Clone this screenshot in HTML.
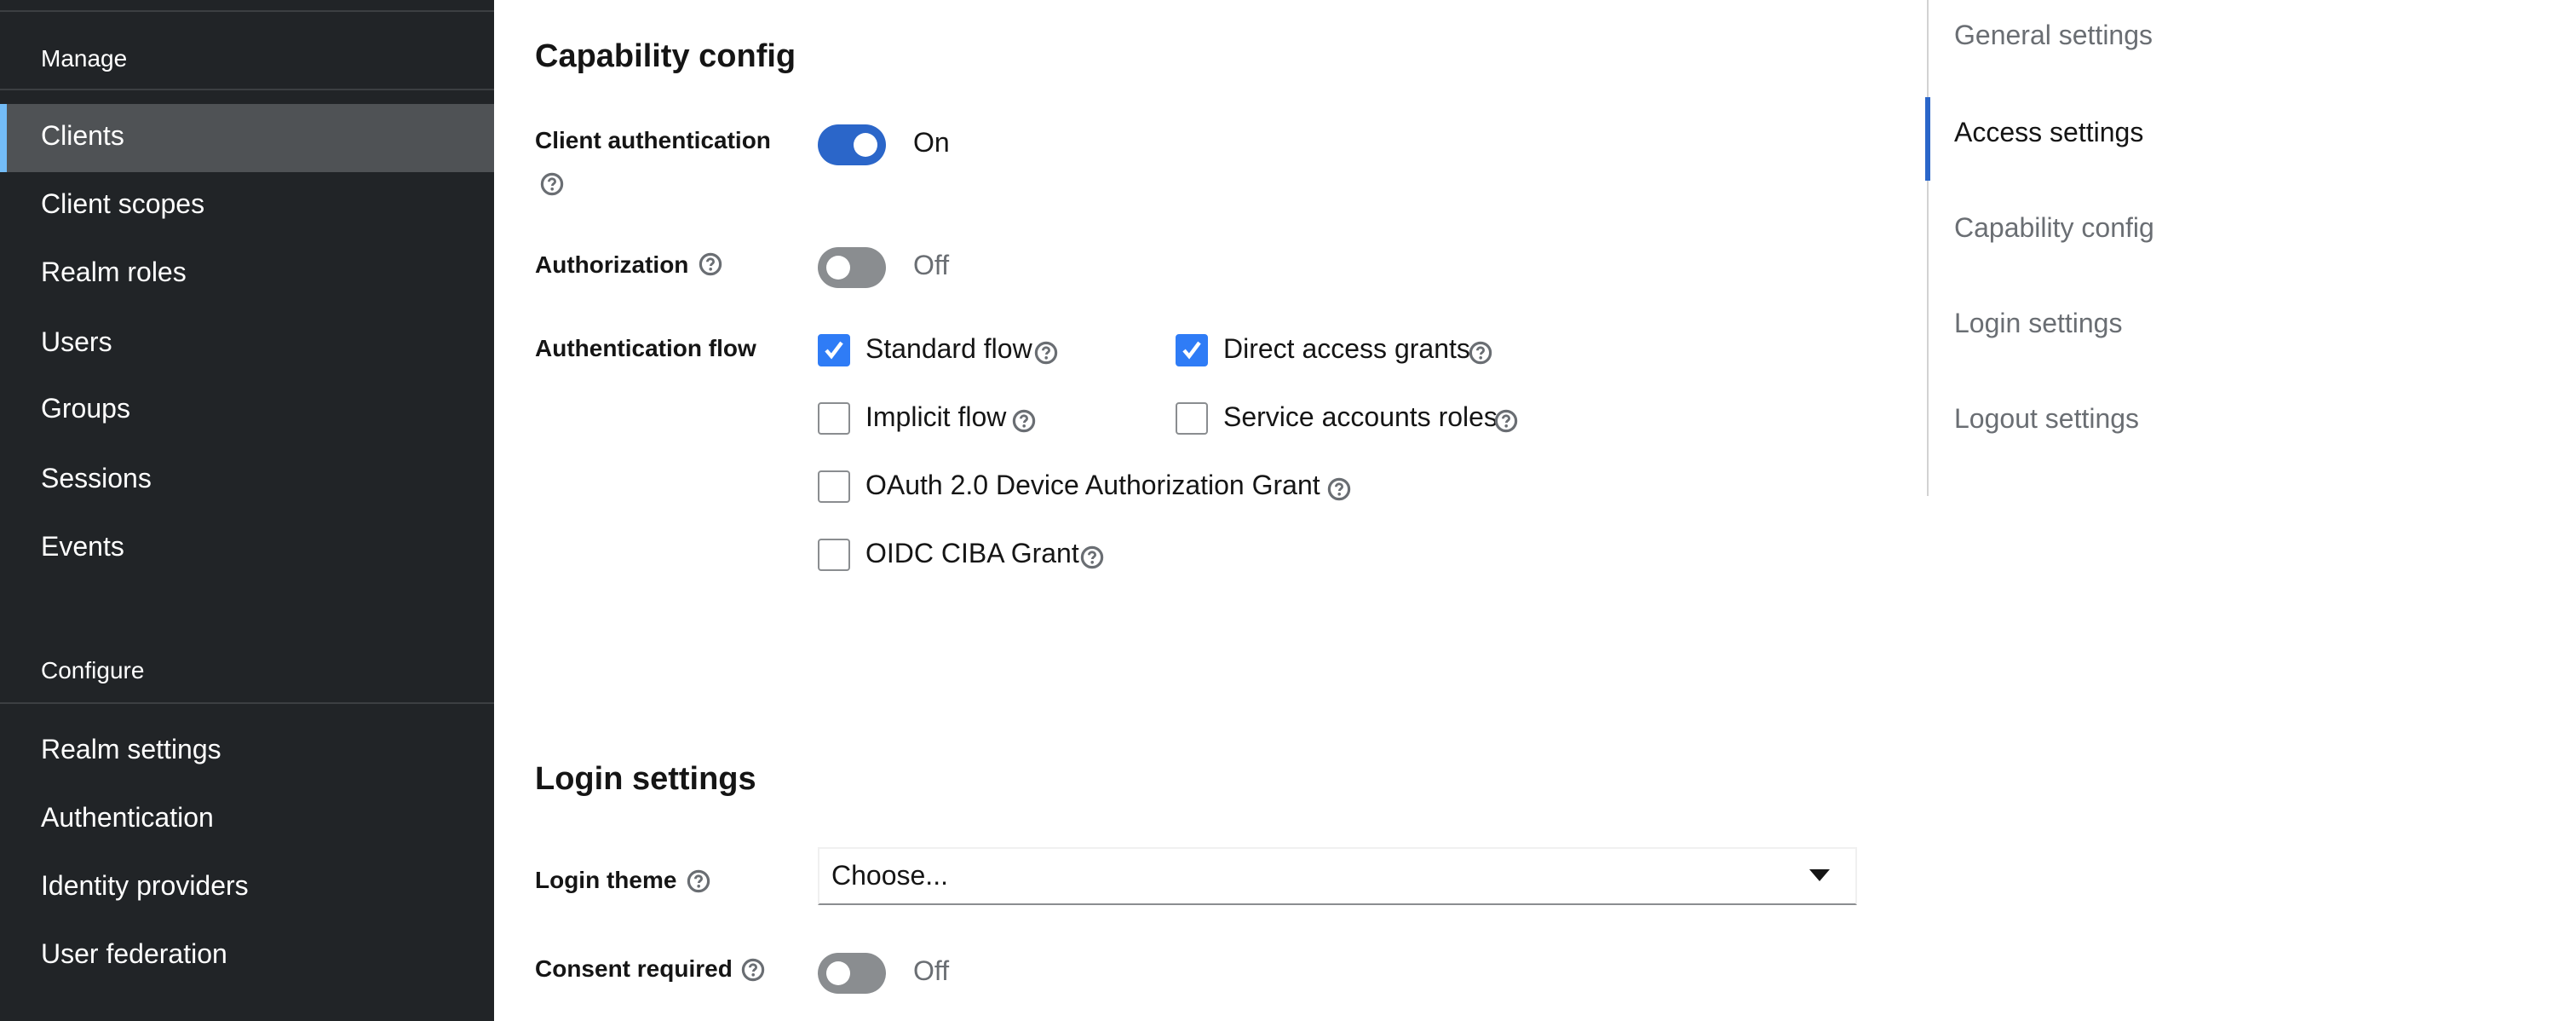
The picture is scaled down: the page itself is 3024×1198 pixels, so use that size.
<!DOCTYPE html>
<html><head><meta charset="utf-8"><style>
html,body{margin:0;padding:0;background:#fff;overflow:hidden;width:3024px;height:1198px}
#w{position:absolute;left:0;top:0;width:1512px;height:599px;transform:scale(2);transform-origin:0 0;font-family:"Liberation Sans",sans-serif;color:#151515}
.a{position:absolute;white-space:nowrap}
#sb{position:absolute;left:0;top:0;width:290px;height:599px;background:#212427}
.sl{position:absolute;left:0;width:290px;height:1px;background:#3c3f42}
.si{position:absolute;left:24px;color:#fff;font-size:16px;line-height:20px}
.sh{position:absolute;left:24px;color:#fff;font-size:14px;line-height:18px}
.lbl{font-size:14px;font-weight:bold;line-height:18px}
.tg{position:absolute;width:40px;height:24px;border-radius:12px}
.tg i{position:absolute;top:5px;width:14px;height:14px;border-radius:50%;background:#fff}
.cb{position:absolute;width:17px;height:17px;border:1px solid #8a8d90;border-radius:2px;background:#fff}
.cb.on{background:#2f7cf6;border-color:#2f7cf6}
.ct{font-size:16px;line-height:20px}
.rn{position:absolute;left:1147px;font-size:16px;line-height:20px;color:#6a6e73}
</style></head><body><div id="w">
<div id="sb">
<div class="sl" style="top:6px"></div>
<div class="sh" style="top:25px">Manage</div>
<div class="sl" style="top:52px"></div>
<div style="position:absolute;left:0;top:61px;width:290px;height:40px;background:#4f5255"></div>
<div style="position:absolute;left:0;top:61px;width:4px;height:40px;background:#73bcf7"></div>
<div class="si" style="top:71px">Clients</div>
<div class="si" style="top:111px">Client scopes</div>
<div class="si" style="top:151px">Realm roles</div>
<div class="si" style="top:192px">Users</div>
<div class="si" style="top:231px">Groups</div>
<div class="si" style="top:272px">Sessions</div>
<div class="si" style="top:312px">Events</div>
<div class="sh" style="top:384px">Configure</div>
<div class="sl" style="top:412px"></div>
<div class="si" style="top:431px">Realm settings</div>
<div class="si" style="top:471px">Authentication</div>
<div class="si" style="top:511px">Identity providers</div>
<div class="si" style="top:551px">User federation</div>
</div>

<svg width="0" height="0" style="position:absolute"><defs><symbol id="q" viewBox="0 0 14 14"><circle cx="7" cy="7" r="5.8" fill="none" stroke="#6a6e73" stroke-width="1.6"/><path d="M5.2 5.6c0-1 .8-1.7 1.8-1.7s1.8.7 1.8 1.6c0 1.2-1.6 1.3-1.6 2.5" fill="none" stroke="#6a6e73" stroke-width="1.4"/><circle cx="7.1" cy="9.9" r=".9" fill="#6a6e73"/></symbol></defs></svg>

<div class="a" style="left:314px;top:21px;font-size:19px;font-weight:bold;line-height:26px">Capability config</div>
<div class="a lbl" style="left:314px;top:73px">Client authentication</div>
<svg class="a" style="left:317px;top:101px" width="14" height="14"><use href="#q"/></svg>
<div class="tg" style="left:480px;top:73px;background:#2b66c9"><i style="left:21px"></i></div>
<div class="a ct" style="left:536px;top:75px">On</div>

<div class="a lbl" style="left:314px;top:146px">Authorization</div>
<svg class="a" style="left:410px;top:148px" width="14" height="14"><use href="#q"/></svg>
<div class="tg" style="left:480px;top:145px;background:#8a8d90"><i style="left:5px"></i></div>
<div class="a ct" style="left:536px;top:147px;color:#6a6e73">Off</div>

<div class="a lbl" style="left:314px;top:195px">Authentication flow</div>
<div class="cb on" style="left:480px;top:196px"><svg width="17" height="17" viewBox="0 0 17 17"><path d="M4 8.5l3 3.5 6-8" fill="none" stroke="#fff" stroke-width="2.2"/></svg></div>
<div class="a ct" style="left:508px;top:196px">Standard flow</div>
<svg class="a" style="left:607px;top:200px" width="14" height="14"><use href="#q"/></svg>
<div class="cb on" style="left:690px;top:196px"><svg width="17" height="17" viewBox="0 0 17 17"><path d="M4 8.5l3 3.5 6-8" fill="none" stroke="#fff" stroke-width="2.2"/></svg></div>
<div class="a ct" style="left:718px;top:196px">Direct access grants</div>
<svg class="a" style="left:862px;top:200px" width="14" height="14"><use href="#q"/></svg>

<div class="cb" style="left:480px;top:236px"></div>
<div class="a ct" style="left:508px;top:236px">Implicit flow</div>
<svg class="a" style="left:594px;top:240px" width="14" height="14"><use href="#q"/></svg>
<div class="cb" style="left:690px;top:236px"></div>
<div class="a ct" style="left:718px;top:236px">Service accounts roles</div>
<svg class="a" style="left:877px;top:240px" width="14" height="14"><use href="#q"/></svg>

<div class="cb" style="left:480px;top:276px"></div>
<div class="a ct" style="left:508px;top:276px">OAuth 2.0 Device Authorization Grant</div>
<svg class="a" style="left:779px;top:280px" width="14" height="14"><use href="#q"/></svg>

<div class="cb" style="left:480px;top:316px"></div>
<div class="a ct" style="left:508px;top:316px">OIDC CIBA Grant</div>
<svg class="a" style="left:634px;top:320px" width="14" height="14"><use href="#q"/></svg>

<div class="a" style="left:314px;top:445px;font-size:19px;font-weight:bold;line-height:26px">Login settings</div>
<div class="a lbl" style="left:314px;top:507px">Login theme</div>
<svg class="a" style="left:403px;top:510px" width="14" height="14"><use href="#q"/></svg>
<div style="position:absolute;left:480px;top:497px;width:608px;height:32px;border:1px solid #f0f0f0;border-bottom:1px solid #8a8d90;background:#fff"></div>
<div class="a ct" style="left:488px;top:505px">Choose...</div>
<svg class="a" style="left:1062px;top:510px" width="12" height="8"><path d="M0 0h12L6 7z" fill="#151515"/></svg>

<div class="a lbl" style="left:314px;top:559px">Consent required</div>
<svg class="a" style="left:435px;top:562px" width="14" height="14"><use href="#q"/></svg>
<div class="tg" style="left:480px;top:559px;background:#8a8d90"><i style="left:5px"></i></div>
<div class="a ct" style="left:536px;top:561px;color:#6a6e73">Off</div>

<div style="position:absolute;left:1131px;top:0;width:1px;height:291px;background:#d2d2d2"></div>
<div style="position:absolute;left:1130px;top:57px;width:3px;height:49px;background:#2b66c9"></div>
<div class="rn" style="top:12px">General settings</div>
<div class="rn" style="top:69px;color:#151515">Access settings</div>
<div class="rn" style="top:125px">Capability config</div>
<div class="rn" style="top:181px">Login settings</div>
<div class="rn" style="top:237px">Logout settings</div>
</div></body></html>
